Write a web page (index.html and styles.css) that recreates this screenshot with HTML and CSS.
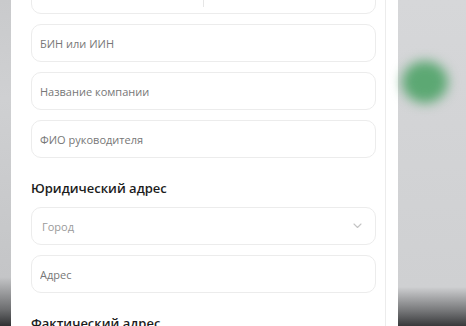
FILE: index.html
```html
<!DOCTYPE html>
<html lang="ru">
<head>
  <meta charset="UTF-8">
  <meta name="viewport" content="width=device-width, initial-scale=1.0">
  <title>Регистрация компании</title>
  <link rel="stylesheet" href="styles.css">
</head>
<body>
  <!-- затемнённый фон слева -->
  <div class="backdrop backdrop-left"></div>

  <!-- модальное окно -->
  <div class="modal">
    <div class="modal-body">
      <div class="field field-split">
        <input class="split-input" type="text">
        <input class="split-input split-right" type="text">
      </div>
      <input class="field" type="text" placeholder="БИН или ИИН">
      <input class="field" type="text" placeholder="Название компании">
      <input class="field" type="text" placeholder="ФИО руководителя">

      <h3 class="section-title">Юридический адрес</h3>
      <div class="field field-select">
        <span class="select-text">Город</span>
        <svg class="chevron" width="9" height="6" viewBox="0 0 9 6">
          <path d="M1 1l3.5 3.5L8 1" fill="none" stroke="#c4c4c4" stroke-width="1.1" stroke-linecap="round" stroke-linejoin="round"/>
        </svg>
      </div>
      <input class="field" type="text" placeholder="Адрес">

      <h3 class="section-title">Фактический адрес</h3>
    </div>
    <div class="scrollbar"></div>
  </div>

  <!-- затемнённый фон справа -->
  <div class="backdrop backdrop-right">
    <div class="blob"></div>
  </div>
</body>
</html>
```

FILE: styles.css
```css
body {
  margin: 0;
  width: 466px;
  height: 326px;
  overflow: hidden;
  display: flex;
  font-family: 'Open Sans', 'Noto Sans', sans-serif;
  background: #d2d3d5;
}

.backdrop {
  height: 100%;
  flex-shrink: 0;
  background: linear-gradient(180deg, #d6d7d9 0%, #cfd0d2 88%, #7a7b7d 95%, #38393b 100%);
}

.backdrop-left {
  width: 11px;
  background: linear-gradient(180deg, #c9cacc 0%, #cfd0d2 30%, #c4c5c7 85%, #6c6d6f 95%, #303133 100%);
}

.backdrop-right {
  flex: 1;
  padding-top: 61px;
  padding-left: 4px;
  box-sizing: border-box;
}

.blob {
  width: 46px;
  height: 42px;
  border-radius: 50%;
  background: #5ca873;
  filter: blur(6px);
}

.modal {
  width: 387px;
  flex-shrink: 0;
  height: 100%;
  background: #ffffff;
  display: flex;
}

.modal-body {
  flex: 1;
  min-width: 0;
  padding: 0 9px 0 20px;
  display: flex;
  flex-direction: column;
  gap: 10px;
}

.scrollbar {
  width: 12px;
  flex-shrink: 0;
  border-left: 1px solid #ececec;
}

.field {
  width: 100%;
  height: 38px;
  flex-shrink: 0;
  box-sizing: border-box;
  border: 1px solid #ececec;
  border-radius: 10px;
  padding: 0 8px;
  font-family: inherit;
  font-size: 11px;
  color: #333;
  background: #fff;
  outline: none;
}

.field::placeholder {
  color: #777777;
}

.field-split {
  margin-top: -24px;
  display: flex;
  padding: 0;
}

.split-input {
  flex: 1;
  width: 0;
  min-width: 0;
  border: none;
  outline: none;
  background: transparent;
  margin: 0 0 6px;
}

.split-right {
  border-left: 1px solid #e6e6e6;
}

.field-select {
  display: flex;
  align-items: center;
  justify-content: space-between;
  padding: 0 13px 0 10px;
}

.select-text {
  color: #9a9a9a;
}

.section-title {
  margin: 11px 0 0;
  font-size: 13px;
  line-height: 18px;
  font-weight: 600;
  color: #1c1c1c;
}
```
